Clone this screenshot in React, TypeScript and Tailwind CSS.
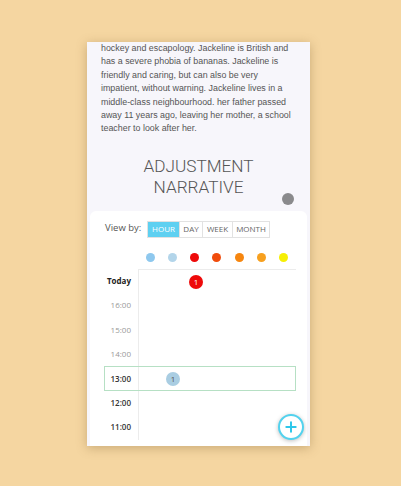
import { Plus } from "lucide-react";

const lines = [
  "hockey and escapology. Jackeline is British and",
  "has a severe phobia of bananas. Jackeline is",
  "friendly and caring, but can also be very",
  "impatient, without warning. Jackeline lives in a",
  "middle-class neighbourhood. her father passed",
  "away 11 years ago, leaving her mother, a school",
  "teacher to look after her.",
];

const dots = ["#8ec8ee", "#b3d5ea", "#ee0a0a", "#f04c0c", "#f6860f", "#f7a01f", "#f6ef05"];

const rows = [
  { label: "Today", cls: "font-bold text-[#222]" },
  { label: "16:00", cls: "text-[#999]" },
  { label: "15:00", cls: "text-[#999]" },
  { label: "14:00", cls: "text-[#999]" },
  { label: "13:00", cls: "font-semibold text-[#333]", active: true },
  { label: "12:00", cls: "font-semibold text-[#333]" },
  { label: "11:00", cls: "font-semibold text-[#333]" },
];

export default function App() {
  return (
    <div className="w-[401px] h-[486px] bg-[#f5d6a1] pl-[87px] pt-[42px] font-['Open_Sans',sans-serif]">
      <div className="relative w-[223px] h-[404px] bg-[#f7f6fb] overflow-hidden flex flex-col shadow-[0_2px_10px_rgba(120,90,40,0.35)]">
        {/* story text */}
        <div className="px-[14px] font-['Liberation_Sans',sans-serif] text-[8.9px] leading-[13.4px] text-[#555]">
          {lines.map((l) => (
            <div key={l} className="whitespace-nowrap">{l}</div>
          ))}
        </div>

        {/* heading */}
        <div className="relative mt-[20px] h-[55px]">
          <div className="text-center font-['Roboto',sans-serif] font-light text-[17.2px] leading-[21px] text-[#555]">
            ADJUSTMENT
            <br />
            NARRATIVE
          </div>
          <div className="absolute right-[16px] top-[37px] w-[12px] h-[12px] rounded-full bg-[#8a8a8c]" />
        </div>

        {/* calendar panel */}
        <div className="mx-[3px] flex-1 bg-white rounded-t-[6px] pt-[10px]">
          <div className="flex items-center pl-[15px]">
            <span className="text-[9.5px] text-[#555] w-[42px] -mt-[2px]">View by:</span>
            <div className="flex h-[17px] text-[8px] text-[#666] border border-[#e2e2e2]">
              <div className="w-[31px] bg-[#5ed0f1] text-white flex items-center justify-center">HOUR</div>
              <div className="w-[23px] border-l border-[#e2e2e2] flex items-center justify-center">DAY</div>
              <div className="w-[30px] border-l border-[#e2e2e2] flex items-center justify-center">WEEK</div>
              <div className="w-[37px] border-l border-[#e2e2e2] flex items-center justify-center">MONTH</div>
            </div>
          </div>

          <div className="flex gap-[13.3px] pl-[55.5px] mt-[15px] h-[9px]">
            {dots.map((c) => (
              <div key={c} className="w-[9px] h-[9px] rounded-full" style={{ backgroundColor: c }} />
            ))}
          </div>

          <div className="mt-[7px] flex flex-col">
            {rows.map((r, i) => (
              <div key={r.label} className="relative flex h-[24.4px]">
                <div className={`w-[48px] pr-[7px] flex items-center justify-end text-[8px] ${r.cls}`}>{r.label}</div>
                <div className={`flex-1 mr-[11px] border-l border-[#ececec] flex items-center ${i === 0 ? "border-t" : ""}`}>
                  {i === 0 && (
                    <div className="ml-[50px] w-[14px] h-[14px] rounded-full bg-[#ee0a0a] text-white text-[8px] leading-none flex items-center justify-center">1</div>
                  )}
                  {r.active && (
                    <div className="ml-[27px] w-[14px] h-[14px] rounded-full bg-[#a9cde2] text-[#555] text-[8px] leading-none flex items-center justify-center">1</div>
                  )}
                </div>
                {r.active && (
                  <div className="absolute inset-y-0 left-[14px] right-[11px] border border-[#b6e0c4]" />
                )}
              </div>
            ))}
          </div>
        </div>

        {/* fab */}
        <div className="absolute right-[6px] bottom-[6px] w-[26px] h-[26px] rounded-full bg-white border-2 border-[#52d2ee] flex items-center justify-center shadow-[0_1px_4px_rgba(0,0,0,0.25)]">
          <Plus className="w-[16px] h-[16px] text-[#2ec7ea]" strokeWidth={3} />
        </div>
      </div>
    </div>
  );
}
